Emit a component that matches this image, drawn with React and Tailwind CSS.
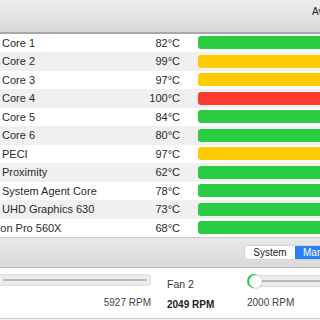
const sensors = [
  { name: "Core 1", temp: "82°C", level: "ok" },
  { name: "Core 2", temp: "99°C", level: "warn" },
  { name: "Core 3", temp: "97°C", level: "warn" },
  { name: "Core 4", temp: "100°C", level: "hot" },
  { name: "Core 5", temp: "84°C", level: "ok" },
  { name: "Core 6", temp: "80°C", level: "ok" },
  { name: "PECI", temp: "97°C", level: "warn" },
  { name: "Proximity", temp: "62°C", level: "ok" },
  { name: "System Agent Core", temp: "78°C", level: "ok" },
  { name: "UHD Graphics 630", temp: "73°C", level: "ok" },
  { name: "Radeon Pro 560X", temp: "68°C", level: "ok", clip: true },
];

const barColor = {
  ok: "bg-[#29cc42]",
  warn: "bg-[#fecb00]",
  hot: "bg-[#fe3a2f]",
};

function SensorRow({ s, i }) {
  return (
    <div
      className={`flex items-center h-[18.5px] ${
        i % 2 === 1 ? "bg-[#f0f0f0]" : "bg-white"
      }`}
    >
      <div className="w-[146px] shrink-0 pl-[2px] overflow-hidden whitespace-nowrap">
        <span className={s.clip ? "ml-[-28px] inline-block" : ""}>{s.name}</span>
      </div>
      <div className="w-[34px] shrink-0 text-right whitespace-nowrap">{s.temp}</div>
      <div
        className={`ml-[18px] w-[140px] h-[13px] shrink-0 rounded-[3px] ${barColor[s.level]}`}
      />
    </div>
  );
}

function Track({ className }) {
  return (
    <div
      className={`h-[12px] shrink-0 rounded-[4px] bg-[#ececec] border border-[#dddddd] flex items-center px-[3px] ${className}`}
    >
      <div className="h-[2px] w-full bg-[#b8b8b8] rounded-full" />
    </div>
  );
}

export default function App() {
  return (
    <div className="w-[320px] h-[320px] overflow-hidden bg-white font-['Liberation_Sans',Arial,sans-serif] text-[11px] text-[#2a2a2a] flex flex-col">
      <div className="h-[32px] shrink-0 bg-gradient-to-b from-[#eeeeee] to-[#d8d8d8] pl-[312px] pt-[4px] text-[10px] text-[#222] whitespace-nowrap">
        Average
      </div>
      <div className="h-[1.5px] shrink-0 bg-[#a9a9a9]" />
      <div className="flex flex-col">
        {sensors.map((s, i) => (
          <SensorRow key={s.name} s={s} i={i} />
        ))}
      </div>
      <div className="h-px shrink-0 bg-[#c9c9c9]" />
      <div className="h-[29px] shrink-0 bg-gradient-to-b from-[#e8e8e8] to-[#dadada] flex items-center pl-[245px]">
        <div className="flex shrink-0 h-[13px] text-[10px] leading-[13px] whitespace-nowrap shadow-[0_0_0_0.5px_#c4c4c4] rounded-[4px]">
          <div className="w-[50px] shrink-0 bg-white rounded-l-[4px] text-center text-[#222]">System</div>
          <div className="w-[40px] shrink-0 bg-[#2d7ff8] text-white pl-[8px]">Manual</div>
        </div>
      </div>
      <div className="h-px shrink-0 bg-[#b9b9b9]" />
      <div className="h-[50px] shrink-0 bg-white flex pt-[6px] whitespace-nowrap">
        <div className="w-[152px] shrink-0 flex flex-col">
          <Track className="w-[151px] rounded-l-none border-l-0" />
          <div className="mt-[9px] pr-[1px] text-right text-[10px] text-[#444]">5927 RPM</div>
        </div>
        <div className="ml-[15px] w-[80px] shrink-0 flex flex-col">
          <div className="mt-[3px] text-[10.5px] text-[#333]">Fan 2</div>
          <div className="mt-[4px] text-[10px] font-bold text-[#222]">2049 RPM</div>
        </div>
        <div className="flex flex-col w-[80px] shrink-0">
          <div className="relative h-[14px] flex items-center">
            <Track className="w-[90px] ml-[2px]" />
            <div className="absolute left-0 top-0 w-[14px] h-[14px] rounded-full bg-[#29cc42]" />
            <div className="absolute left-[1.5px] top-[0.5px] w-[13px] h-[13px] rounded-full bg-white shadow-[0_0.5px_1.5px_rgba(0,0,0,0.35)]" />
          </div>
          <div className="mt-[7px] text-[10px] text-[#444]">2000 RPM</div>
        </div>
      </div>
      <div className="h-px shrink-0 bg-[#d0d0d0]" />
      <div className="flex-1 bg-[#f2f2f2]" />
    </div>
  );
}
